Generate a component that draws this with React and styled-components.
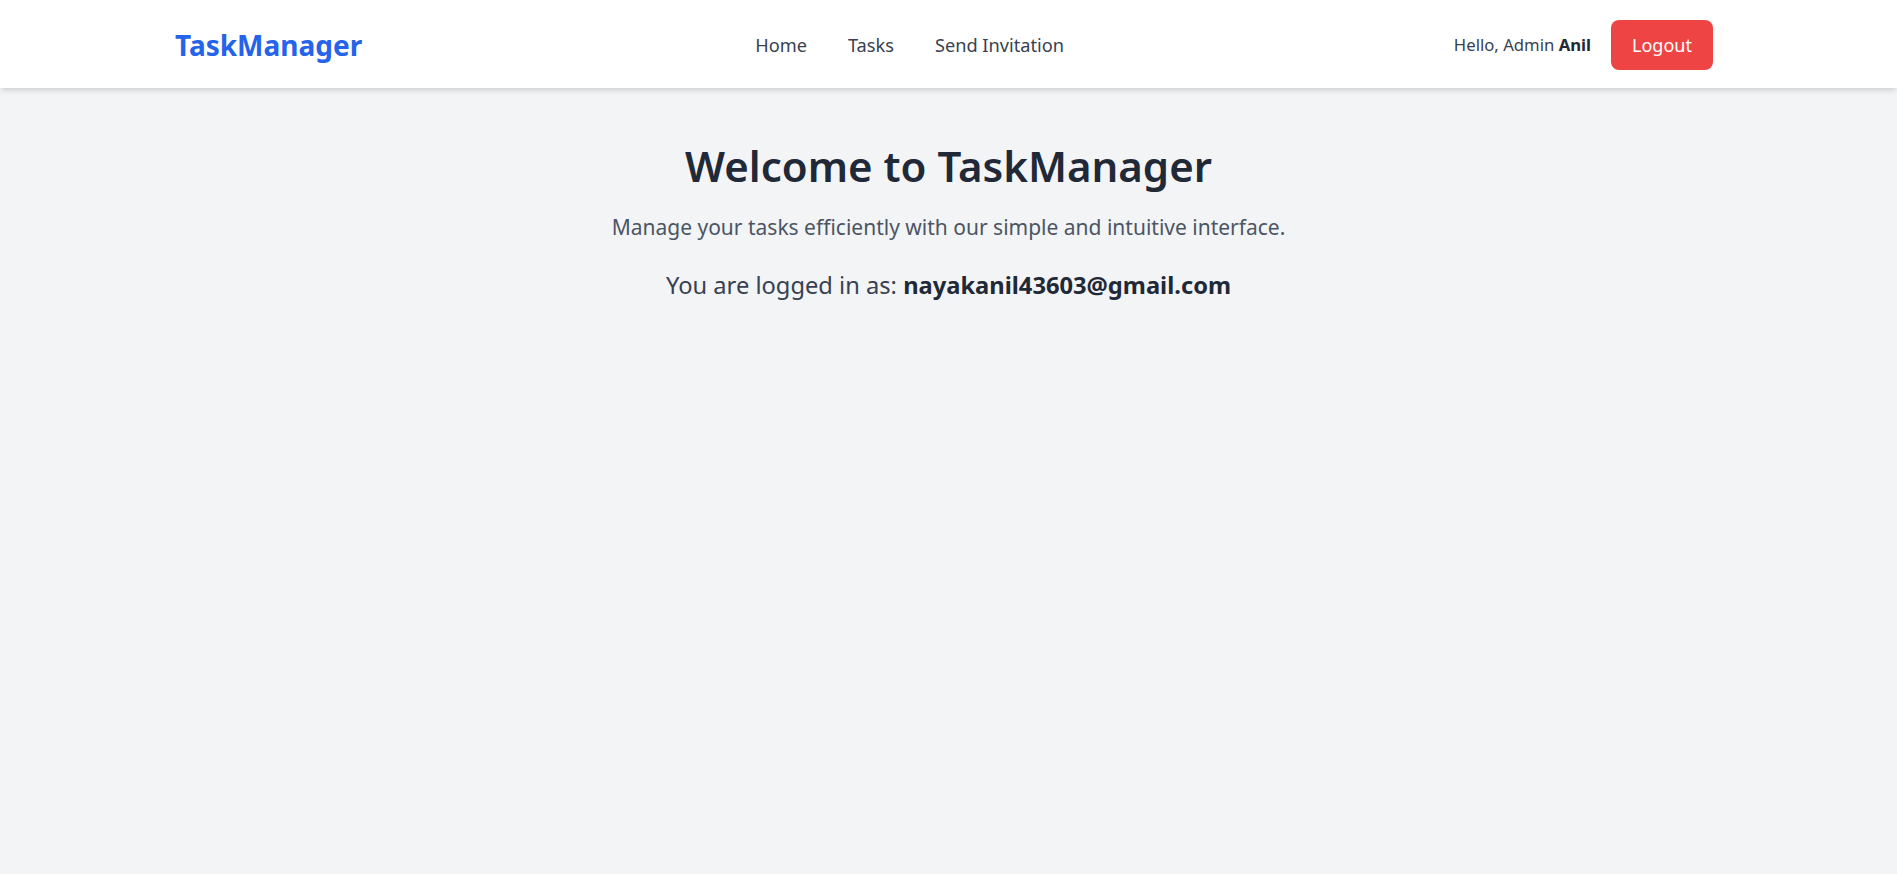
import React from 'react';
import styled, { createGlobalStyle } from 'styled-components';

const GlobalStyle = createGlobalStyle`
  html, body {
    margin: 0;
    padding: 0;
    background: #f3f4f6;
    font-family: "Noto Sans", "Open Sans", sans-serif;
  }
  * { box-sizing: border-box; }
`;

const Page = styled.div`
  min-height: 874px;
  background: #f3f4f6;
`;

const Navbar = styled.nav`
  height: 88px;
  background: #ffffff;
  box-shadow: 0 4px 6px -1px rgba(0, 0, 0, 0.1), 0 2px 4px -2px rgba(0, 0, 0, 0.1);
  display: flex;
  align-items: center;
  padding: 1px 184px 0 175px;
  position: relative;
`;

const Brand = styled.a`
  font-size: 28px;
  font-weight: 700;
  color: #2563eb;
  text-decoration: none;
`;

const NavLinks = styled.ul`
  display: flex;
  gap: 41px;
  list-style: none;
  margin: 0 0 0 393px;
  padding: 0;
`;

const NavLink = styled.a`
  font-size: 18.2px;
  color: #374151;
  text-decoration: none;
`;

const UserArea = styled.div`
  display: flex;
  align-items: center;
  gap: 20px;
  margin-left: auto;
`;

const Greeting = styled.span`
  font-size: 16.7px;
  color: #374151;
  b { color: #1f2937; font-weight: 700; }
`;

const LogoutButton = styled.button`
  width: 102px;
  height: 50px;
  border: none;
  border-radius: 8px;
  background: #ef4444;
  color: #ffffff;
  font-family: inherit;
  font-size: 18px;
  cursor: pointer;
`;

const Main = styled.main`
  text-align: center;
  padding-top: 51px;
`;

const Title = styled.h1`
  margin: 0;
  font-size: 42px;
  font-weight: 600;
  line-height: 1.3;
  color: #1f2937;
`;

const Subtitle = styled.p`
  margin: 18px 0 0;
  font-size: 21px;
  line-height: 1.5;
  color: #4b5563;
`;

const LoggedIn = styled.p`
  margin: 25px 0 0;
  font-size: 23.7px;
  line-height: 1.5;
  color: #374151;
  strong { color: #1f2937; font-weight: 700; }
`;

export default function App() {
  return (
    <Page>
      <GlobalStyle />
      <Navbar>
        <Brand href="#">TaskManager</Brand>
        <NavLinks>
          <li><NavLink href="#">Home</NavLink></li>
          <li><NavLink href="#">Tasks</NavLink></li>
          <li><NavLink href="#">Send Invitation</NavLink></li>
        </NavLinks>
        <UserArea>
          <Greeting>Hello, Admin <b>Anil</b></Greeting>
          <LogoutButton>Logout</LogoutButton>
        </UserArea>
      </Navbar>
      <Main>
        <Title>Welcome to TaskManager</Title>
        <Subtitle>Manage your tasks efficiently with our simple and intuitive interface.</Subtitle>
        <LoggedIn>You are logged in as: <strong>nayakanil43603@gmail.com</strong></LoggedIn>
      </Main>
    </Page>
  );
}
